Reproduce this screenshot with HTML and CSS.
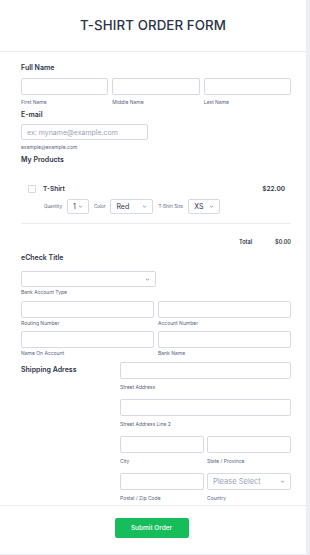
FILE: index.html
```html
<!DOCTYPE html>
<html lang="en">
<head>
    <meta charset="UTF-8">
    <meta name="viewport" content="width=device-width, initial-scale=1.0">
    <title>T-Shirt Order Form</title>
    <link rel="stylesheet" href="styles.css">
</head>
<body>

    <div class="card">
        <div class="header">
            <h1>T-SHIRT ORDER FORM</h1>
        </div>

        <div class="body">
            <!-- Full name -->
            <div class="field">
                <div class="label">Full Name</div>
                <div class="cols3">
                    <div><input class="box" type="text"><div class="sub">First Name</div></div>
                    <div><input class="box" type="text"><div class="sub">Middle Name</div></div>
                    <div><input class="box" type="text"><div class="sub">Last Name</div></div>
                </div>
            </div>

            <!-- Email -->
            <div class="field email">
                <div class="label">E-mail</div>
                <input class="box email-box" type="text" placeholder="ex: myname@example.com">
                <div class="sub">example@example.com</div>
            </div>

            <!-- Products -->
            <div class="field products">
                <div class="label">My Products</div>
                <div class="product">
                    <span class="check"></span>
                    <span class="product-name">T-Shirt</span>
                    <span class="price">$22.00</span>
                </div>
                <div class="options">
                    <span class="opt-label">Quantity</span>
                    <div class="select qty">1 <svg viewBox="0 0 10 10"><path d="M3 4l2 2 2-2"/></svg></div>
                    <span class="opt-label">Color</span>
                    <div class="select color">Red <svg viewBox="0 0 10 10"><path d="M3 4l2 2 2-2"/></svg></div>
                    <span class="opt-label">T-Shirt Size</span>
                    <div class="select size">XS <svg viewBox="0 0 10 10"><path d="M3 4l2 2 2-2"/></svg></div>
                </div>
                <div class="divider"></div>
                <div class="total">
                    <span class="total-label">Total</span>
                    <span class="total-value">$0.00</span>
                </div>
            </div>

            <!-- eCheck -->
            <div class="field echeck">
                <div class="label">eCheck Title</div>
                <div class="select bank-type"><span></span><svg viewBox="0 0 10 10"><path d="M3 4l2 2 2-2"/></svg></div>
                <div class="sub">Bank Account Type</div>
                <div class="cols2">
                    <div><input class="box" type="text"><div class="sub">Routing Number</div></div>
                    <div><input class="box" type="text"><div class="sub">Account Number</div></div>
                    <div><input class="box" type="text"><div class="sub">Name On Account</div></div>
                    <div><input class="box" type="text"><div class="sub">Bank Name</div></div>
                </div>
            </div>

            <!-- Shipping -->
            <div class="field shipping">
                <div class="label side">Shipping Adress</div>
                <div class="address">
                    <div class="full"><input class="box" type="text"><div class="sub">Street Address</div></div>
                    <div class="full"><input class="box" type="text"><div class="sub">Street Address Line 2</div></div>
                    <div><input class="box" type="text"><div class="sub">City</div></div>
                    <div><input class="box" type="text"><div class="sub">State / Province</div></div>
                    <div><input class="box" type="text"><div class="sub">Postal / Zip Code</div></div>
                    <div>
                        <div class="select country"><span>Please Select</span><svg viewBox="0 0 10 10"><path d="M3 4l2 2 2-2"/></svg></div>
                        <div class="sub">Country</div>
                    </div>
                </div>
            </div>
        </div>

        <div class="footer">
            <button class="submit">Submit Order</button>
        </div>
    </div>

</body>
</html>
```

FILE: styles.css
```css
body {
    margin: 0;
    background-color: #eceef3;
    font-family: Inter, "Noto Sans", sans-serif;
    color: #2c3345;
}

.card {
    width: 306px;
    height: 554px;
    background-color: #fff;
    box-sizing: border-box;
}

.header {
    height: 52px;
    border-bottom: 1px solid #eaebf0;
    display: flex;
    align-items: center;
    justify-content: center;
    box-sizing: border-box;
}

h1 {
    margin: 0;
    font-size: 13.3px;
    font-weight: 500;
    letter-spacing: 0.1px;
    color: #2c3345;
    padding-bottom: 2px;
}

.body {
    padding: 11px 15px 0 21px;
}

.label {
    font-size: 7px;
    font-weight: 600;
    line-height: 10px;
    margin-bottom: 5px;
}

.sub {
    font-size: 5px;
    line-height: 8px;
    color: #57647e;
    margin-top: 3px;
}

.box {
    display: block;
    width: 100%;
    height: 17px;
    margin: 0;
    padding: 0 5px;
    box-sizing: border-box;
    border: 1px solid #d6dae3;
    border-radius: 2px;
    background: #fff;
    font-family: inherit;
    font-size: 7px;
    color: #2c3345;
    outline: none;
}

.box::placeholder {
    color: #9aa3b5;
}

.cols3 {
    display: grid;
    grid-template-columns: 1fr 1fr 1fr;
    gap: 4px;
}

.cols2 {
    display: grid;
    grid-template-columns: 1fr 1fr;
    column-gap: 4px;
    row-gap: 4px;
    margin-top: 5px;
}

.email {
    margin-top: 4px;
}

.email .label {
    margin-bottom: 4px;
}

.email-box {
    width: 127px;
    height: 16px;
}

.products {
    margin-top: 4px;
}

.product {
    display: flex;
    align-items: center;
    margin-top: 20px;
    padding: 0 6px 0 7px;
}

.check {
    width: 8px;
    height: 8px;
    border: 1px solid #d6dae3;
    border-radius: 1px;
    box-sizing: border-box;
}

.product-name {
    margin-left: 7px;
    font-size: 6.5px;
    font-weight: 600;
}

.price {
    margin-left: auto;
    font-size: 6.5px;
    font-weight: 600;
}

.options {
    display: flex;
    align-items: center;
    margin-top: 6px;
    padding-left: 23px;
}

.opt-label {
    font-size: 4.5px;
    color: #57647e;
    margin-right: 5px;
}

.select {
    display: flex;
    align-items: center;
    justify-content: space-between;
    height: 15px;
    padding: 0 4px 0 5px;
    box-sizing: border-box;
    border: 1px solid #d6dae3;
    border-radius: 2px;
    background: #fff;
    font-size: 7px;
    color: #2c3345;
    margin-right: 5px;
    flex-shrink: 0;
}

.select svg {
    width: 7px;
    height: 7px;
    fill: none;
    stroke: #57647e;
    stroke-width: 1;
}

.qty { width: 22px; }
.color { width: 43px; }
.size { width: 32px; }

.divider {
    height: 1px;
    background-color: #eaebf0;
    margin-top: 9px;
}

.total {
    display: flex;
    justify-content: flex-end;
    align-items: center;
    margin-top: 15px;
    font-size: 5.5px;
    font-weight: 600;
}

.total-label {
    margin-right: 23px;
}

.echeck {
    margin-top: 8px;
}

.echeck .label {
    margin-bottom: 8px;
}

.bank-type {
    width: 135px;
    height: 16px;
    margin-right: 0;
}

.echeck .sub {
    margin-top: 1px;
}

.shipping {
    display: flex;
    margin-top: 5px;
}

.label.side {
    width: 99px;
    flex-shrink: 0;
    margin-top: 3px;
}

.address {
    flex: 1;
    display: grid;
    grid-template-columns: 1fr 1fr;
    column-gap: 3px;
    row-gap: 8px;
}

.address .full {
    grid-column: 1 / 3;
}

.address .sub {
    margin-top: 4px;
}

.country {
    height: 17px;
    margin-right: 0;
    color: #9aa3b5;
    font-size: 7.5px;
}

.footer {
    margin-top: 3px;
    border-top: 1px solid #eaebf0;
    display: flex;
    justify-content: center;
    padding-top: 12px;
    padding-right: 3px;
}

.submit {
    width: 74px;
    height: 20px;
    border: none;
    border-radius: 2px;
    background-color: #18bd5b;
    color: #fff;
    font-family: inherit;
    font-size: 6.5px;
    font-weight: 500;
    cursor: pointer;
}
```
